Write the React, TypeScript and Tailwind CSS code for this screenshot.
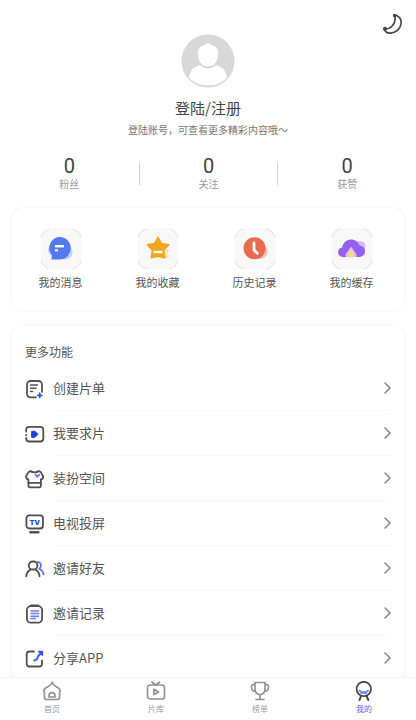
import type { ReactNode } from "react";

const stats = [
  { label: "粉丝", value: 0 },
  { label: "关注", value: 0 },
  { label: "获赞", value: 0 },
];

const MoonIcon = () => (
  <svg viewBox="0 0 20 22" className="h-[22px] w-5" fill="none" stroke="#444" strokeWidth="1.600" strokeLinecap="round" strokeLinejoin="round">
    <path d="M13 2.800c4.500 1.700 6.700 5.300 6 9.400-.9 5-5.400 8.700-10.300 8.900-3.500.1-5.900-1.300-6.400-4.100 3.200.2 5.700-.8 7.900-3 2.400-2.500 3.700-5 2.800-11.200z" />
    <circle cx="12.600" cy="3.600" r="1" fill="#444" />
    <circle cx="3" cy="16.800" r="1.200" fill="#333" />
  </svg>
);

const AvatarIcon = () => (
  <svg viewBox="0 0 54 54" className="h-[54px] w-[54px]">
    <circle cx="27" cy="27" r="26.500" fill="#d8d8d8" />
    <path d="M27 9c2.500 2 6 2.300 8.500 4.500 1.500 2 1.500 4 1.500 6.500 0 8-4.500 12.500-10 12.500S17 28 17 20c0-2.500 0-4.500 1.500-6.500C21 11.300 24.500 11 27 9z" fill="#fff" />
    <path d="M8 43.500C9 36 14 31.800 19 31.600c2.400 2 5 3 8 3s5.600-1 8-3c5 .2 10 4.400 11 11.900-5 5.500-11.800 8-19 8s-14-2.500-19-8z" fill="#fff" />
  </svg>
);

// Soft square behind each of the shortcut icons
const Tile = ({ children }: { children: ReactNode }) => (
  <svg viewBox="0 0 42 42" className="h-[42px] w-[42px]">
    <rect x="0.500" y="0.500" width="41" height="41" rx="12" fill="#f8f8f8" />
    <g fill="none" stroke="#e2e2e2" strokeWidth="1">
      <path d="M1 9.500C2 5 5 2 9.500 1" />
      <path d="M32.500 1C37 2 40 5 41 9.500" />
      <path d="M41 32.500c-1 4.500-4 7.500-8.500 8.500" />
      <path d="M9.500 41C5 40 2 37 1 32.500" />
    </g>
    {children}
  </svg>
);

const shortcuts = [
  {
    label: "我的消息",
    icon: (
      <Tile>
        <circle cx="25" cy="24" r="7.500" fill="#c5cffb" />
        <circle cx="14" cy="22" r="6" fill="#c5cffb" />
        <path d="M19.500 9a11 11 0 1 1 0 22.500H11.500l.3-4.500A11 11 0 0 1 19.500 9z" fill="#5479ec" />
        <path d="M15 18.200h9" stroke="#fff" strokeWidth="2.400" />
        <path d="M15 22.300h3" stroke="#fff" strokeWidth="2" />
      </Tile>
    ),
  },
  {
    label: "我的收藏",
    icon: (
      <Tile>
        <path d="M27 21l6 1-3 3 1 5-6 1z" fill="#fde2b0" />
        <path
          d="M21 9.500l3.300 6.200 7.200 1.200-5 5.200 1 7.400-6.500-1.500-6.500 1.500 1-7.400-5-5.200 7.200-1.200z"
          fill="#f6a51c"
          stroke="#f6a51c"
          strokeWidth="1.800"
          strokeLinejoin="round"
        />
        <path d="M16.500 24h9" stroke="#fff" strokeWidth="2.400" />
      </Tile>
    ),
  },
  {
    label: "历史记录",
    icon: (
      <Tile>
        <circle cx="26" cy="23.500" r="7.500" fill="#f7bdae" />
        <circle cx="20.500" cy="20.300" r="11" fill="#e56c50" />
        <path d="M20 15v7l3.300 3.200" fill="none" stroke="#fff" strokeWidth="2.800" strokeLinecap="round" strokeLinejoin="round" />
      </Tile>
    ),
  },
  {
    label: "我的缓存",
    icon: (
      <Tile>
        <circle cx="29" cy="18.500" r="5.500" fill="#d3bcfb" />
        <circle cx="29.500" cy="23" r="4.500" fill="#b48ef8" />
        <path d="M11.500 29a4.800 4.800 0 0 1-.4-9.500C12 14.500 15.800 11.500 20 11.500c4 0 7.300 2.300 8.600 6a5.700 5.700 0 0 1-.6 11.500z" fill="#9560ec" />
        <path d="M20 18.500l5.500 8v3h-11v-3z" fill="#fff" opacity=".6" />
        <path d="M20 20.500l3.800 6h-1.300v3h-5v-3h-1.300z" fill="#f7d98e" />
      </Tile>
    ),
  },
];

const LineIcon = ({ children }: { children: ReactNode }) => (
  <svg
    viewBox="0 0 20 20"
    className="h-5 w-5 shrink-0"
    fill="none"
    stroke="#505050"
    strokeWidth="1.800"
    strokeLinecap="round"
    strokeLinejoin="round"
  >
    {children}
  </svg>
);

const menu = [
  {
    label: "创建片单",
    icon: (
      <LineIcon>
        <path d="M11 18.300H5.500A3.500 3.500 0 0 1 2 14.800V5.500A3.500 3.500 0 0 1 5.500 2h8A3.500 3.500 0 0 1 17 5.500v7.300" />
        <path d="M5.500 6h7M5.500 9.300h5.500M5.500 12.500h2" strokeWidth="1.400" />
        <path d="M14.800 13.500l.9 2 2 .9-2 .9-.9 2-.9-2-2-.9 2-.9z" fill="#2f50e8" stroke="#2f50e8" strokeWidth=".6" />
      </LineIcon>
    ),
  },
  {
    label: "我要求片",
    icon: (
      <LineIcon>
        <path d="M1.200 7.500V5.500A3 3 0 0 1 4 2.800h11.500a3 3 0 0 1 2.800 2.700v9.300a3 3 0 0 1-2.800 2.700H4a3 3 0 0 1-2.800-2.700v-.8" />
        <path d="M1.200 11v.2" />
        <path d="M7 7.300h3l3 3-3 3H7z" fill="#1f40e0" stroke="#1f40e0" strokeWidth="1" />
      </LineIcon>
    ),
  },
  {
    label: "装扮空间",
    icon: (
      <LineIcon>
        <path d="M5.500 2c2 1.800 6.200 1.800 8.200 0l2.300 1.300 2.200 4.200c.1 1.700-.8 2.800-2.300 3v6c0 1-.8 1.800-1.800 1.800H5.200c-1 0-1.800-.8-1.800-1.800v-6C1.900 10.300 1 9.200 1.100 7.500l2.200-4.200z" />
        <path d="M3.500 13.800h12.300" />
        <path d="M10.300 5.600c.5 1.800 3.300 1.800 4 .2M12 7.500v.5" stroke="#5570ee" strokeWidth="1.700" />
      </LineIcon>
    ),
  },
  {
    label: "电视投屏",
    icon: (
      <LineIcon>
        <rect x="1.400" y="1.300" width="16.600" height="13.200" rx="3" />
        <path d="M5.500 18.200h7.700" strokeWidth="2.600" />
        <text x="9.700" y="10.800" textAnchor="middle" fill="#2747e6" stroke="none" className="font-['Roboto',sans-serif] text-[8px] font-black">
          TV
        </text>
      </LineIcon>
    ),
  },
  {
    label: "邀请好友",
    icon: (
      <LineIcon>
        <path d="M12.800 2.800c3.600.6 4.200 5 1.500 7 2.500 1.200 3.700 2.800 4.200 5.700" stroke="#5a75ee" />
        <rect x="3.800" y="2.500" width="8.600" height="8" rx="3.800" />
        <path d="M1.300 17.300c.2-3.200 1.500-5.300 4.200-6.700M10.500 10.600c2.600 1.400 3.800 3.500 4 6.700" />
      </LineIcon>
    ),
  },
  {
    label: "邀请记录",
    icon: (
      <LineIcon>
        <rect x="1.900" y="2.200" width="15.200" height="16.500" rx="4" />
        <path d="M6.300 1.800h6.600" strokeWidth="2.400" />
        <path d="M6 7h7.500M6 9.600h7.500M6 12.200h7.500M6 14.600h4.500" stroke="#6780f0" strokeWidth="1.500" />
      </LineIcon>
    ),
  },
  {
    label: "分享APP",
    icon: (
      <LineIcon>
        <path d="M9 2.500H4.500a2.800 2.800 0 0 0-2.800 2.800v9.400a2.800 2.800 0 0 0 2.800 2.800h9.700a2.800 2.800 0 0 0 2.800-2.800V11.500" />
        <path d="M9.300 11.500l2.700-1.300 1.100-3L15.500 4.700" stroke="#3f62ea" strokeWidth="2" />
        <path d="M13.500 2.300h4v4z" fill="#2f55ea" stroke="#2f55ea" strokeWidth="1.200" />
      </LineIcon>
    ),
  },
];

const tabs = [
  {
    label: "首页",
    icon: (
      <>
        <path d="M10.300 1.200c.7 2.200 2.600 4 6 5.800 1.800 1.200 2.300 2.600 1.300 4.200v4.500a2.800 2.800 0 0 1-2.800 2.800H5.200a2.800 2.800 0 0 1-2.800-2.800v-4.500c-1-1.600-.5-3 1.300-4.200 3.400-1.800 5.700-3.600 6.600-5.800z" />
        <path d="M7 16v-1.300a3 3 0 0 1 6 0V16z" />
      </>
    ),
  },
  {
    label: "片库",
    icon: (
      <>
        <rect x="1.500" y="4" width="17" height="14" rx="2.500" />
        <path d="M6 1.200L9.800 4l3.800-2.800M8 8.200l4.500 2.700L8 13.600z" />
      </>
    ),
  },
  {
    label: "榜单",
    icon: (
      <>
        <path d="M5 1.500h10v7a5 5 0 0 1-10 0zM5 3.500C2.500 3.200 1.300 4.600 1.500 6.500c.2 2.400 1.600 3.800 3.800 4M15 3.500c2.500-.3 3.700 1.100 3.500 3-.2 2.400-1.600 3.800-3.800 4M10 13.500v5M6 18.500h8" />
      </>
    ),
  },
  {
    label: "我的",
    active: true,
    icon: (
      <>
        <path d="M5.500 9.500c2.500 3.300 6 3.300 8.500 0M7.500 12.300l2.300-1.300 2.300 1.300" stroke="#6f82f4" strokeWidth="2" />
        <circle cx="9.800" cy="8" r="7.200" />
        <path d="M7 15l-1.500 4M12.600 15l1.700 4" strokeWidth="2" />
      </>
    ),
  },
];

const ProfileHeader = () => {
  return (
    <header className="flex flex-col pt-3">
      <button type="button" aria-label="夜间模式" className="mr-3.5 self-end">
        <MoonIcon />
      </button>
      <button type="button" className="flex flex-col items-center self-center">
        <AvatarIcon />
        <span className="mt-2.5 text-[15px] leading-5 text-[#444]">登陆/注册</span>
        <span className="mt-1 text-[10px] leading-4 text-[#777]">登陆账号，可查看更多精彩内容哦～</span>
      </button>
      <div className="mt-[18px] flex items-center">
        {stats.map((stat, i) => (
          <div key={stat.label} className="flex flex-1 items-center">
            {i > 0 && <span className="h-[22px] w-px bg-[#d0d0d0]" />}
            <div className="flex flex-1 flex-col items-center">
              <span className="font-['Roboto',sans-serif] text-xl leading-5 text-[#444]">{stat.value}</span>
              <span className="text-[10px] leading-4 text-[#999]">{stat.label}</span>
            </div>
          </div>
        ))}
      </div>
    </header>
  );
};

const App = () => {
  return (
    <div className="flex h-screen flex-col bg-[#fefefe] font-['Noto_Sans_CJK_SC',sans-serif]">
      <main className="min-h-0 flex-1 overflow-y-auto [scrollbar-width:none]">
        <ProfileHeader />

        <section className="mx-3 mt-4 flex rounded-xl bg-white pt-5 pr-1 pb-5 shadow-[0_0_4px_rgba(0,0,0,0.05)]">
          {shortcuts.map((item) => (
            <button key={item.label} type="button" className="flex flex-1 flex-col items-center">
              {item.icon}
              <span className="mt-1 text-[11px] leading-4 text-[#555]">{item.label}</span>
            </button>
          ))}
        </section>

        <section className="mx-3 mt-4 rounded-xl bg-white px-[13px] pt-4 shadow-[0_0_4px_rgba(0,0,0,0.05)]">
          <h2 className="text-xs leading-5 text-[#555]">更多功能</h2>
          <ul className="mt-1">
            {menu.map((item) => (
              <li key={item.label}>
                <button type="button" className="flex w-full items-center gap-2 text-left">
                  {item.icon}
                  <span className="flex h-[45px] flex-1 items-center justify-between border-b border-[#f7f7f7] text-[13px] leading-5 text-[#555]">
                    {item.label}
                    <svg viewBox="0 0 7 12" className="h-3 w-[7px]" fill="none" stroke="#888" strokeWidth="1.600" strokeLinecap="round" strokeLinejoin="round">
                      <path d="M1 1l5 5-5 5" />
                    </svg>
                  </span>
                </button>
              </li>
            ))}
          </ul>
        </section>
      </main>

      <nav className="flex border-t border-[#f5f5f5] bg-white pt-[3px] pb-1">
        {tabs.map((tab) => (
          <a key={tab.label} href="#" className="flex flex-1 flex-col items-center">
            <svg
              viewBox="0 0 20 20"
              className="h-5 w-5"
              fill="none"
              stroke={tab.active ? "#444" : "#939393"}
              strokeWidth="1.700"
              strokeLinecap="round"
              strokeLinejoin="round"
            >
              {tab.icon}
            </svg>
            <span className={tab.active ? "mt-px text-[8px] leading-3.5 text-[#5a64f5]" : "mt-px text-[8px] leading-3.5 text-[#999]"}>
              {tab.label}
            </span>
          </a>
        ))}
      </nav>
    </div>
  );
};

export default App;
